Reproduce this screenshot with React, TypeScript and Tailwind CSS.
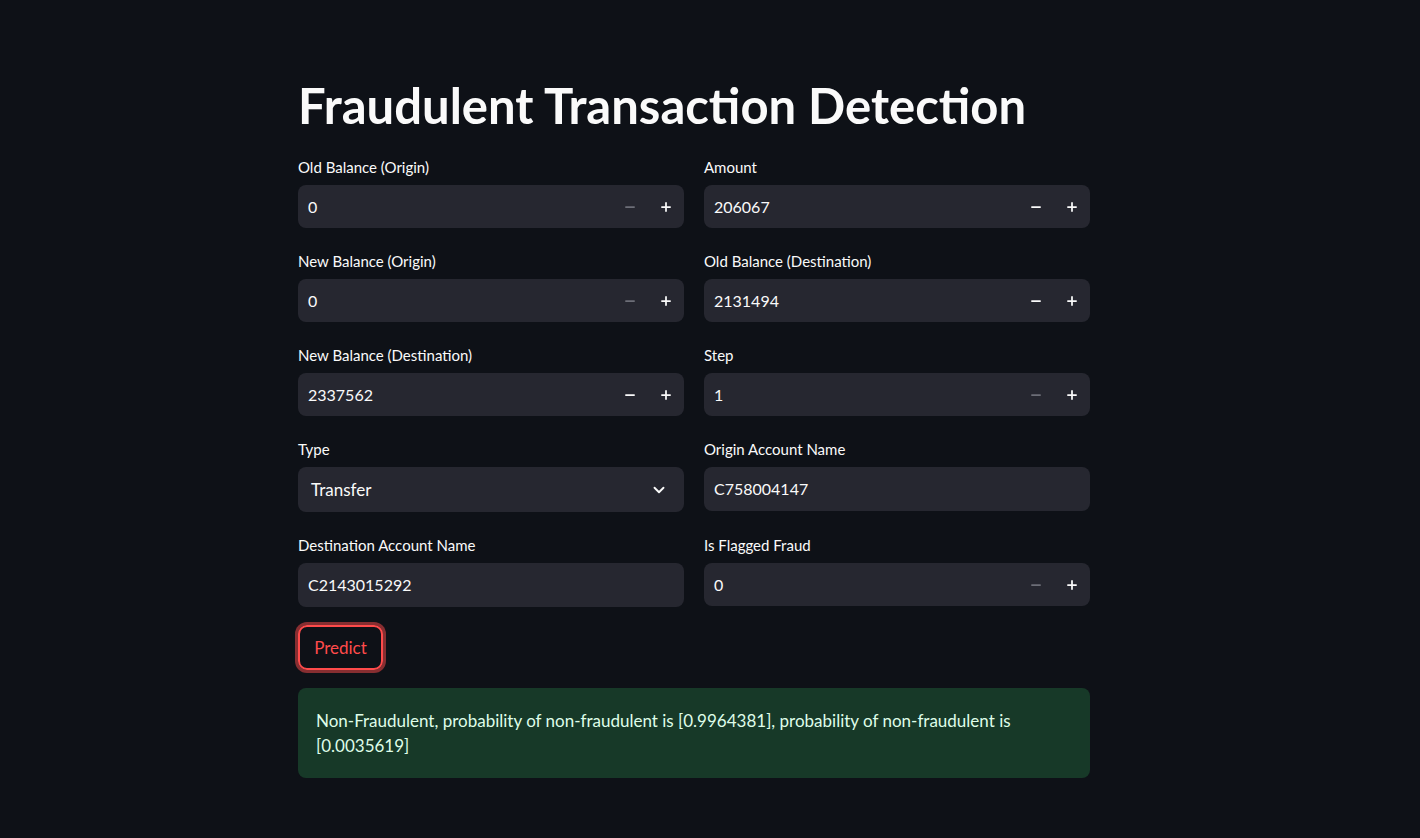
import { ChevronDown, Minus, Plus } from "lucide-react";

type NumProps = { label: string; value: string; minDisabled?: boolean };

function Label({ children }: { children: string }) {
  return <div className="mb-[8px] h-[20px] text-[15px] leading-[20px] text-[#fafafa]">{children}</div>;
}

function NumberField({ label, value, minDisabled }: NumProps) {
  return (
    <div>
      <Label>{label}</Label>
      <div className="flex h-[43px] items-center rounded-[8px] bg-[#262730] pl-[10px] pr-[11px]">
        <span className="flex-1 text-[16px] text-[#fafafa]">{value}</span>
        <Minus
          size={14}
          strokeWidth={3}
          className={minDisabled ? "mr-[22px] text-[#6c6e77]" : "mr-[22px] text-[#fafafa]"}
        />
        <Plus size={14} strokeWidth={3} className="text-[#fafafa]" />
      </div>
    </div>
  );
}

function TextField({ label, value }: { label: string; value: string }) {
  return (
    <div>
      <Label>{label}</Label>
      <div className="flex h-[44px] items-center rounded-[8px] bg-[#262730] px-[10px] text-[16px] text-[#fafafa]">
        {value}
      </div>
    </div>
  );
}

function SelectField({ label, value }: { label: string; value: string }) {
  return (
    <div>
      <Label>{label}</Label>
      <div className="flex h-[45px] items-center justify-between rounded-[8px] bg-[#262730] pl-[13px] pr-[16px] text-[17px] text-[#fafafa]">
        {value}
        <ChevronDown size={18} strokeWidth={2.5} />
      </div>
    </div>
  );
}

export default function App() {
  return (
    <div
      className="min-h-screen bg-[#0e1117] pt-[76px]"
      style={{ fontFamily: '"Source Sans Pro", Lato, "Noto Sans", sans-serif' }}
    >
      <div className="mx-auto w-[792px] translate-x-[-16px]">
        <h1 className="mb-[23px] text-[49px] font-bold leading-[58px] text-[#fafafa]">
          Fraudulent Transaction Detection
        </h1>
        <div className="grid grid-cols-2 gap-x-[20px] gap-y-[23px]">
          <NumberField label="Old Balance (Origin)" value="0" minDisabled />
          <NumberField label="Amount" value="206067" />
          <NumberField label="New Balance (Origin)" value="0" minDisabled />
          <NumberField label="Old Balance (Destination)" value="2131494" />
          <NumberField label="New Balance (Destination)" value="2337562" />
          <NumberField label="Step" value="1" minDisabled />
          <SelectField label="Type" value="Transfer" />
          <TextField label="Origin Account Name" value="C758004147" />
          <TextField label="Destination Account Name" value="C2143015292" />
          <NumberField label="Is Flagged Fraud" value="0" minDisabled />
        </div>
        <button
          type="button"
          className="mt-[18px] h-[45px] w-[85px] rounded-[9px] border-2 border-[#ff4b4b] text-[17px] text-[#ff4b4b] shadow-[0_0_0_3px_rgba(255,75,75,0.5)]"
        >
          Predict
        </button>
        <div className="mt-[18px] rounded-[8px] bg-[#173928] px-[18px] py-[20px] text-[17px] leading-[25px] text-[#dffde9]">
          Non-Fraudulent, probability of non-fraudulent is [0.9964381], probability of non-fraudulent is [0.0035619]
        </div>
      </div>
    </div>
  );
}
